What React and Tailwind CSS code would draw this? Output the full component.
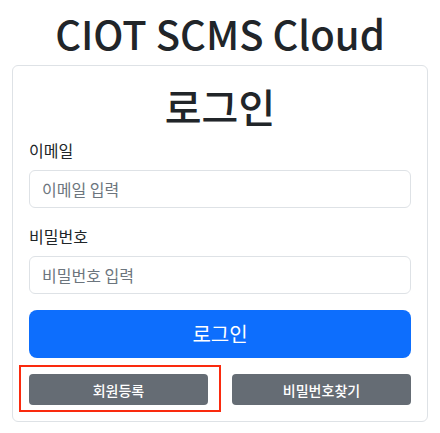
import React from "react";

export default function App() {
  return (
    <div className="min-h-[433px] w-[440px] bg-white px-3 pt-[9px] font-['Noto_Sans_CJK_KR','Noto_Sans',sans-serif] text-[#212529]">
      <h1 className="mb-2 text-center text-[40px] font-medium leading-[48px]">
        CIOT SCMS Cloud
      </h1>

      <div className="rounded-[6px] border border-[#dee2e6] p-4">
        <h2 className="mb-2 text-center text-[40px] font-medium leading-[48px]">
          로그인
        </h2>

        <form onSubmit={(e) => e.preventDefault()}>
          <div className="mb-4">
            <label className="mb-2 block text-base leading-6">이메일</label>
            <input
              type="email"
              placeholder="이메일 입력"
              className="block h-[38px] w-full rounded-[6px] border border-[#dee2e6] px-3 text-base text-[#212529] outline-none placeholder:text-[#6c757d]"
            />
          </div>

          <div className="mb-4">
            <label className="mb-2 block text-base leading-6">비밀번호</label>
            <input
              type="password"
              placeholder="비밀번호 입력"
              className="block h-[38px] w-full rounded-[6px] border border-[#dee2e6] px-3 text-base text-[#212529] outline-none placeholder:text-[#6c757d]"
            />
          </div>

          <button
            type="submit"
            className="mb-4 block h-12 w-full rounded-lg bg-[#0d6efd] text-xl leading-[30px] text-white"
          >
            로그인
          </button>

          <div className="grid grid-cols-2 gap-6">
            <div className="relative">
              <button
                type="button"
                className="block h-[31px] w-full rounded bg-[#656c74] text-sm font-medium text-white"
              >
                회원등록
              </button>
              {/* highlight box */}
              <span className="pointer-events-none absolute left-[-10px] top-[-9px] h-[47px] w-[202px] border-2 border-[#fa2a0e]" />
            </div>
            <button
              type="button"
              className="block h-[31px] w-full rounded bg-[#656c74] text-sm font-medium text-white"
            >
              비밀번호찾기
            </button>
          </div>
        </form>
      </div>
    </div>
  );
}
